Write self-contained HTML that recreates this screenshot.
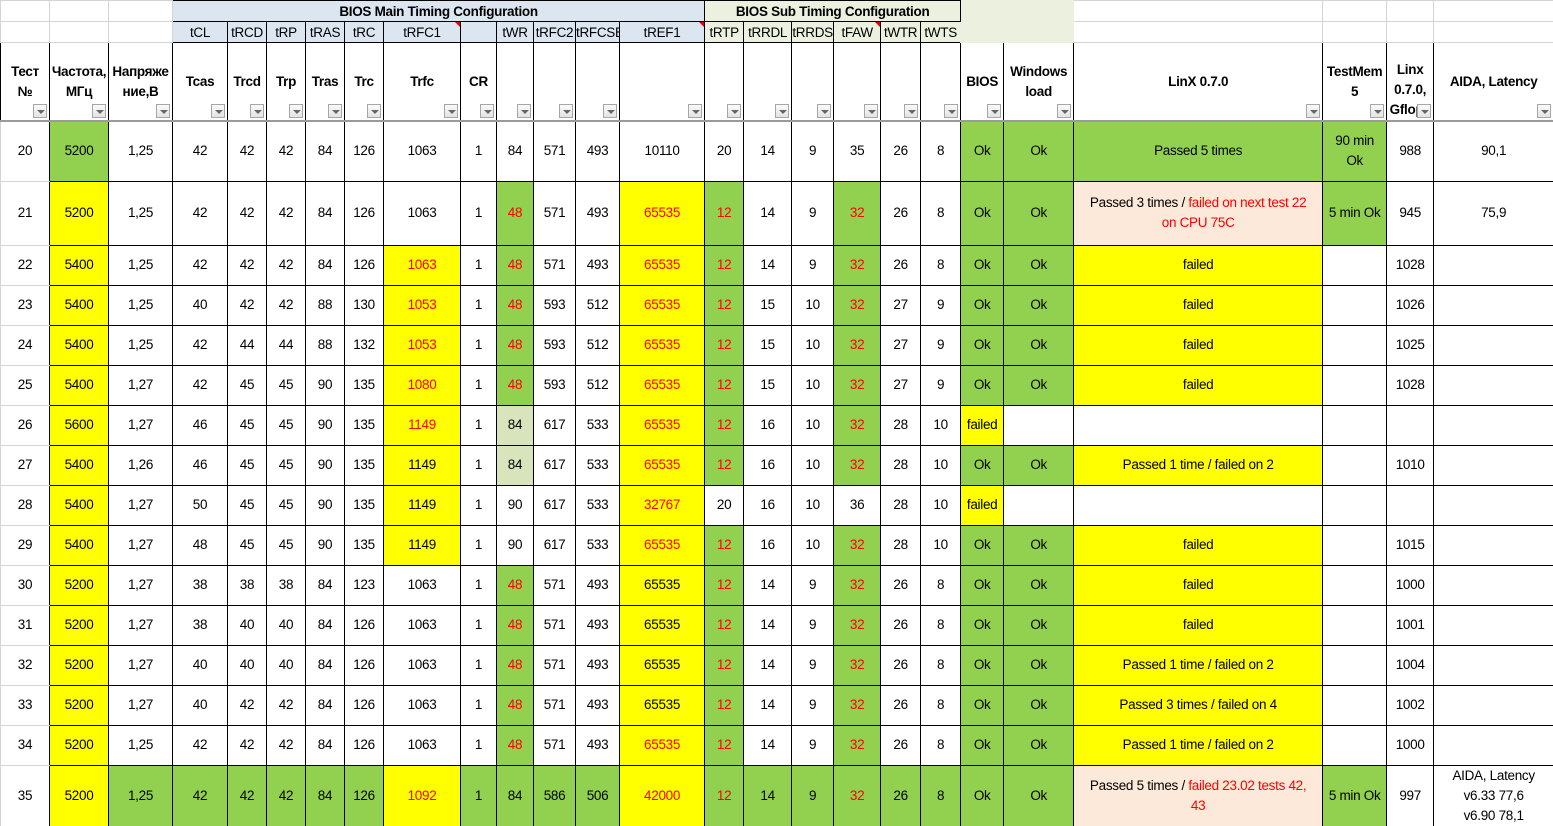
<!DOCTYPE html>
<html><head><meta charset="utf-8">
<style>
html,body{margin:0;padding:0;background:#fff;width:1553px;height:826px;overflow:hidden}
table{width:1553px;border-collapse:collapse;table-layout:fixed;font-family:"Liberation Sans",sans-serif;font-size:13.5px;color:#000;letter-spacing:-0.3px}
td{border:1px solid #000;text-align:center;vertical-align:middle;padding:0;overflow:hidden;white-space:nowrap;position:relative;line-height:20px}
tr.h1 td,tr.h2 td{border:1px solid #d4d4d4;height:20px;line-height:19px}
tr.h1 td.b,tr.h2 td.b{background:#dce6f1;border:1px solid #000}
tr.h1 td.s,tr.h2 td.s{background:#ebf1de;border:1px solid #000}
tr.h1 td.e,tr.h2 td.e{background:#ebf1de;border-color:#ebf1de}
tr.h3 td{font-weight:bold;white-space:normal;height:77px;border-bottom:2px solid #9a9a9a;line-height:20px}
tr.h3 td .t{position:relative;top:0px}
.dd{position:absolute;right:2px;bottom:2px;width:14px;height:14px;border:1px solid #a6a6a6;background:linear-gradient(#fafafa,#e4e4e4);box-sizing:border-box}
.dd:after{content:"";position:absolute;left:3px;top:5px;border-left:4px solid transparent;border-right:4px solid transparent;border-top:4px solid #666}
td.c0{border-top-color:#d4d4d4;border-bottom-color:#d4d4d4;border-left-color:#d4d4d4}
.g{background:#92d050}.y{background:#ffff00}.p{background:#fde9d9;white-space:normal}.l{background:#d8e4bc}
.r{color:#ff0000}
.w{white-space:normal}
.tri:before{content:"";position:absolute;right:0;top:0;border-top:5px solid #e00;border-left:5px solid transparent}
</style></head><body>
<table>
<colgroup>
<col style="width:49px"><col style="width:59px"><col style="width:64px"><col style="width:55px"><col style="width:39px"><col style="width:39px"><col style="width:39px"><col style="width:39px"><col style="width:77px"><col style="width:36px"><col style="width:37px"><col style="width:42px"><col style="width:44px"><col style="width:85px"><col style="width:39px"><col style="width:48px"><col style="width:42px"><col style="width:47px"><col style="width:40px"><col style="width:40px"><col style="width:43px"><col style="width:70px"><col style="width:249px"><col style="width:64px"><col style="width:47px"><col style="width:120px">
</colgroup>
<tr class="h1"><td></td><td></td><td></td><td class="b" colspan="11" style="font-weight:bold">BIOS Main Timing Configuration</td><td class="s" colspan="6" style="font-weight:bold">BIOS Sub Timing Configuration</td><td class="e" colspan="2" rowspan="2"></td><td></td><td></td><td></td><td></td></tr>
<tr class="h2"><td></td><td></td><td></td><td class="b">tCL</td><td class="b">tRCD</td><td class="b">tRP</td><td class="b">tRAS</td><td class="b">tRC</td><td class="b tri">tRFC1</td><td class="b"></td><td class="b">tWR</td><td class="b">tRFC2</td><td class="b">tRFCSB</td><td class="b tri">tREF1</td><td class="s">tRTP</td><td class="s">tRRDL</td><td class="s">tRRDS</td><td class="s tri">tFAW</td><td class="s">tWTR</td><td class="s">tWTS</td><td></td><td></td><td></td><td></td></tr>
<tr class="h3"><td><span class="t">Тест<br>№</span><i class="dd"></i></td><td><span class="t">Частота,<br>МГц</span><i class="dd"></i></td><td><span class="t">Напряже<br>ние,В</span><i class="dd"></i></td><td>Tcas<i class="dd"></i></td><td>Trcd<i class="dd"></i></td><td>Trp<i class="dd"></i></td><td>Tras<i class="dd"></i></td><td>Trc<i class="dd"></i></td><td>Trfc<i class="dd"></i></td><td>CR<i class="dd"></i></td><td><i class="dd"></i></td><td><i class="dd"></i></td><td><i class="dd"></i></td><td><i class="dd"></i></td><td><i class="dd"></i></td><td><i class="dd"></i></td><td><i class="dd"></i></td><td><i class="dd"></i></td><td><i class="dd"></i></td><td><i class="dd"></i></td><td>BIOS<i class="dd"></i></td><td><span class="t">Windows<br>load</span><i class="dd"></i></td><td>LinX 0.7.0<i class="dd"></i></td><td><span class="t">TestMem<br>5</span><i class="dd"></i></td><td><span class="t" style="display:block;height:62px;overflow:hidden;top:9px">Linx<br>0.7.0,<br>Gflops</span><i class="dd"></i></td><td>AIDA, Latency<i class="dd"></i></td></tr>

<tr style="height:60px"><td class="c0">20</td><td class="g">5200</td><td>1,25</td><td>42</td><td>42</td><td>42</td><td>84</td><td>126</td><td>1063</td><td>1</td><td>84</td><td>571</td><td>493</td><td>10110</td><td>20</td><td>14</td><td>9</td><td>35</td><td>26</td><td>8</td><td class="g">Ok</td><td class="g">Ok</td><td class="g">Passed 5 times</td><td class="g w">90 min<br>Ok</td><td>988</td><td>90,1</td></tr>
<tr style="height:64px"><td class="c0">21</td><td class="y">5200</td><td>1,25</td><td>42</td><td>42</td><td>42</td><td>84</td><td>126</td><td>1063</td><td>1</td><td class="g r">48</td><td>571</td><td>493</td><td class="y r">65535</td><td class="g r">12</td><td>14</td><td>9</td><td class="g r">32</td><td>26</td><td>8</td><td class="g">Ok</td><td class="g">Ok</td><td class="p">Passed 3 times / <span class="r">failed on next test 22<br>on CPU 75C</span></td><td class="g">5 min Ok</td><td>945</td><td>75,9</td></tr>
<tr style="height:40px"><td class="c0">22</td><td class="y">5400</td><td>1,25</td><td>42</td><td>42</td><td>42</td><td>84</td><td>126</td><td class="y r">1063</td><td>1</td><td class="g r">48</td><td>571</td><td>493</td><td class="y r">65535</td><td class="g r">12</td><td>14</td><td>9</td><td class="g r">32</td><td>26</td><td>8</td><td class="g">Ok</td><td class="g">Ok</td><td class="y">failed</td><td></td><td>1028</td><td></td></tr>
<tr style="height:40px"><td class="c0">23</td><td class="y">5400</td><td>1,25</td><td>40</td><td>42</td><td>42</td><td>88</td><td>130</td><td class="y r">1053</td><td>1</td><td class="g r">48</td><td>593</td><td>512</td><td class="y r">65535</td><td class="g r">12</td><td>15</td><td>10</td><td class="g r">32</td><td>27</td><td>9</td><td class="g">Ok</td><td class="g">Ok</td><td class="y">failed</td><td></td><td>1026</td><td></td></tr>
<tr style="height:40px"><td class="c0">24</td><td class="y">5400</td><td>1,25</td><td>42</td><td>44</td><td>44</td><td>88</td><td>132</td><td class="y r">1053</td><td>1</td><td class="g r">48</td><td>593</td><td>512</td><td class="y r">65535</td><td class="g r">12</td><td>15</td><td>10</td><td class="g r">32</td><td>27</td><td>9</td><td class="g">Ok</td><td class="g">Ok</td><td class="y">failed</td><td></td><td>1025</td><td></td></tr>
<tr style="height:40px"><td class="c0">25</td><td class="y">5400</td><td>1,27</td><td>42</td><td>45</td><td>45</td><td>90</td><td>135</td><td class="y r">1080</td><td>1</td><td class="g r">48</td><td>593</td><td>512</td><td class="y r">65535</td><td class="g r">12</td><td>15</td><td>10</td><td class="g r">32</td><td>27</td><td>9</td><td class="g">Ok</td><td class="g">Ok</td><td class="y">failed</td><td></td><td>1028</td><td></td></tr>
<tr style="height:40px"><td class="c0">26</td><td class="y">5600</td><td>1,27</td><td>46</td><td>45</td><td>45</td><td>90</td><td>135</td><td class="y r">1149</td><td>1</td><td class="l">84</td><td>617</td><td>533</td><td class="y r">65535</td><td class="g r">12</td><td>16</td><td>10</td><td class="g r">32</td><td>28</td><td>10</td><td class="y">failed</td><td></td><td></td><td></td><td></td><td></td></tr>
<tr style="height:40px"><td class="c0">27</td><td class="y">5400</td><td>1,26</td><td>46</td><td>45</td><td>45</td><td>90</td><td>135</td><td class="y">1149</td><td>1</td><td class="l">84</td><td>617</td><td>533</td><td class="y r">65535</td><td class="g r">12</td><td>16</td><td>10</td><td class="g r">32</td><td>28</td><td>10</td><td class="g">Ok</td><td class="g">Ok</td><td class="y">Passed 1 time / failed on 2</td><td></td><td>1010</td><td></td></tr>
<tr style="height:40px"><td class="c0">28</td><td class="y">5400</td><td>1,27</td><td>50</td><td>45</td><td>45</td><td>90</td><td>135</td><td class="y">1149</td><td>1</td><td>90</td><td>617</td><td>533</td><td class="y r">32767</td><td>20</td><td>16</td><td>10</td><td>36</td><td>28</td><td>10</td><td class="y">failed</td><td></td><td></td><td></td><td></td><td></td></tr>
<tr style="height:40px"><td class="c0">29</td><td class="y">5400</td><td>1,27</td><td>48</td><td>45</td><td>45</td><td>90</td><td>135</td><td class="y">1149</td><td>1</td><td>90</td><td>617</td><td>533</td><td class="y r">65535</td><td class="g r">12</td><td>16</td><td>10</td><td class="g r">32</td><td>28</td><td>10</td><td class="g">Ok</td><td class="g">Ok</td><td class="y">failed</td><td></td><td>1015</td><td></td></tr>
<tr style="height:40px"><td class="c0">30</td><td class="y">5200</td><td>1,27</td><td>38</td><td>38</td><td>38</td><td>84</td><td>123</td><td>1063</td><td>1</td><td class="g r">48</td><td>571</td><td>493</td><td class="y">65535</td><td class="g r">12</td><td>14</td><td>9</td><td class="g r">32</td><td>26</td><td>8</td><td class="g">Ok</td><td class="g">Ok</td><td class="y">failed</td><td></td><td>1000</td><td></td></tr>
<tr style="height:40px"><td class="c0">31</td><td class="y">5200</td><td>1,27</td><td>38</td><td>40</td><td>40</td><td>84</td><td>126</td><td>1063</td><td>1</td><td class="g r">48</td><td>571</td><td>493</td><td class="y">65535</td><td class="g r">12</td><td>14</td><td>9</td><td class="g r">32</td><td>26</td><td>8</td><td class="g">Ok</td><td class="g">Ok</td><td class="y">failed</td><td></td><td>1001</td><td></td></tr>
<tr style="height:40px"><td class="c0">32</td><td class="y">5200</td><td>1,27</td><td>40</td><td>40</td><td>40</td><td>84</td><td>126</td><td>1063</td><td>1</td><td class="g r">48</td><td>571</td><td>493</td><td class="y">65535</td><td class="g r">12</td><td>14</td><td>9</td><td class="g r">32</td><td>26</td><td>8</td><td class="g">Ok</td><td class="g">Ok</td><td class="y">Passed 1 time / failed on 2</td><td></td><td>1004</td><td></td></tr>
<tr style="height:40px"><td class="c0">33</td><td class="y">5200</td><td>1,27</td><td>40</td><td>42</td><td>42</td><td>84</td><td>126</td><td>1063</td><td>1</td><td class="g r">48</td><td>571</td><td>493</td><td class="y">65535</td><td class="g r">12</td><td>14</td><td>9</td><td class="g r">32</td><td>26</td><td>8</td><td class="g">Ok</td><td class="g">Ok</td><td class="y">Passed 3 times / failed on 4</td><td></td><td>1002</td><td></td></tr>
<tr style="height:40px"><td class="c0">34</td><td class="y">5200</td><td>1,25</td><td>42</td><td>42</td><td>42</td><td>84</td><td>126</td><td>1063</td><td>1</td><td class="g r">48</td><td>571</td><td>493</td><td class="y r">65535</td><td class="g r">12</td><td>14</td><td>9</td><td class="g r">32</td><td>26</td><td>8</td><td class="g">Ok</td><td class="g">Ok</td><td class="y">Passed 1 time / failed on 2</td><td></td><td>1000</td><td></td></tr>
<tr style="height:61px"><td class="c0">35</td><td class="y">5200</td><td class="g">1,25</td><td class="g">42</td><td class="g">42</td><td class="g">42</td><td class="g">84</td><td class="g">126</td><td class="y r">1092</td><td class="g">1</td><td class="g">84</td><td class="g">586</td><td class="g">506</td><td class="y r">42000</td><td class="g r">12</td><td class="g">14</td><td class="g">9</td><td class="g r">32</td><td class="g">26</td><td class="g">8</td><td class="g">Ok</td><td class="g">Ok</td><td class="p">Passed 5 times / <span class="r">failed 23.02 tests 42,<br>43</span></td><td class="g">5 min Ok</td><td>997</td><td class="w">AIDA, Latency<br>v6.33 77,6<br>v6.90 78,1</td></tr>
</table>
</body></html>
